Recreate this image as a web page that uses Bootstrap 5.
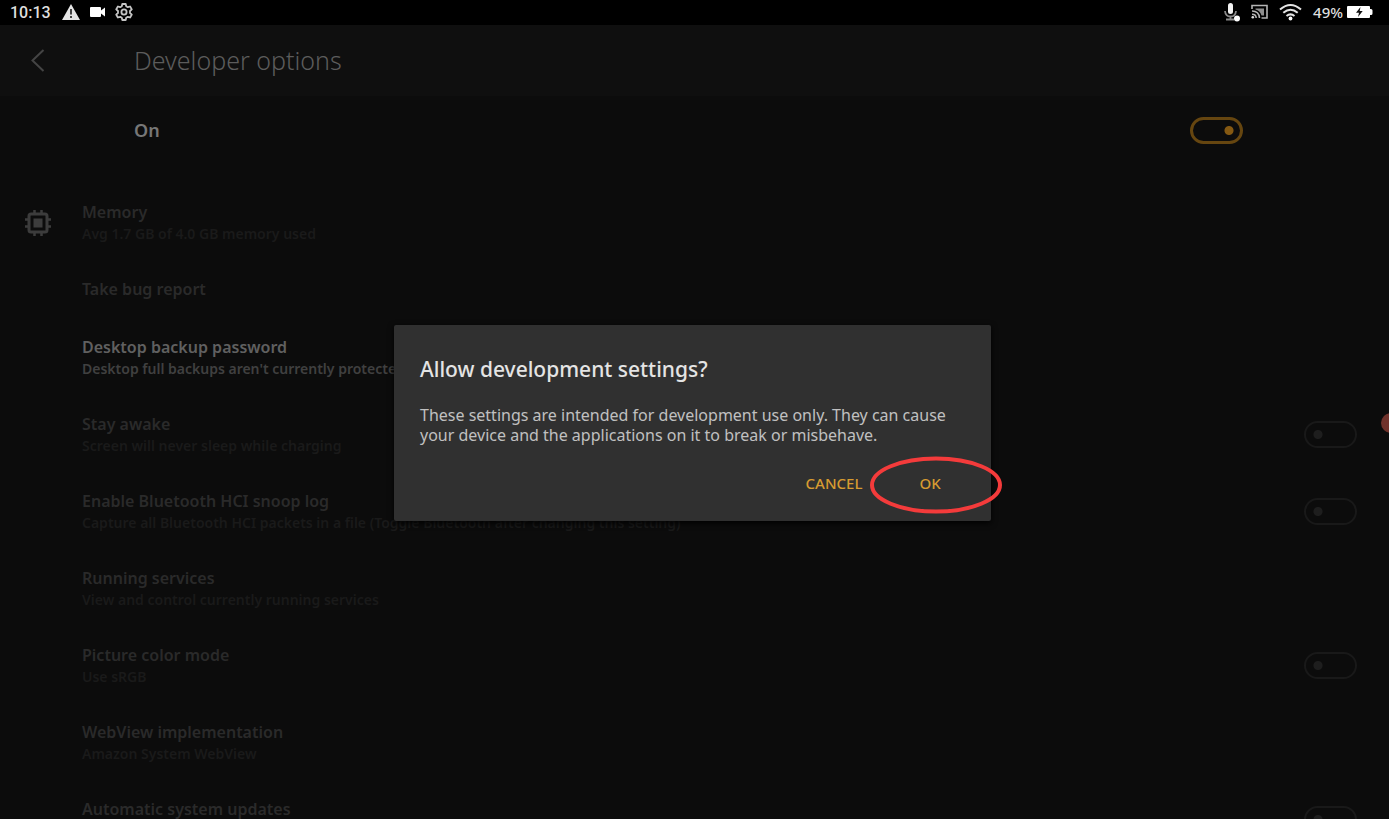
<!DOCTYPE html>
<html lang="en">
<head>
<meta charset="utf-8">
<meta name="viewport" content="width=device-width, initial-scale=1">
<title>Developer options</title>
<link href="https://cdn.jsdelivr.net/npm/bootstrap@5.3.0/dist/css/bootstrap.min.css" rel="stylesheet">
<style>
  body { background: #0c0c0c; color: #2a2a2a; font-family: "Noto Sans", "Open Sans", sans-serif; font-size: 16px; line-height: 21px; }
  svg { display: block; flex: none; }
  .status-bar { height: 26px; background: #000; color: #dedede; padding: 0 16px 0 10px; font-family: Roboto, sans-serif; font-size: 16px; font-weight: 500; }
  .status-left { gap: 10px; }
  .status-left span { width: 42px; }
  .status-right { gap: 11px; }
  .status-battery { gap: 4px; font-family: "Noto Sans", sans-serif; font-size: 15px; font-weight: 500; }
  .title-bar { height: 71px; background: #0f0f0f; padding-left: 30px; }
  .back-btn { width: 104px; color: #444; }
  .title-bar h1 { font-size: 25px; line-height: 34px; font-weight: 300; color: #5c5c5c; }
  .master-row { height: 70px; padding: 0 146px 0 134px; }
  .master-row label { font-size: 18px; font-weight: 600; color: #777; }
  .options { padding-top: 18px; }
  .option { padding: 18px 32px 17px 24px; }
  .option.single { padding-bottom: 19px; }
  .option-icon { width: 58px; color: #3c3c3c; }
  .option-name { font-weight: 600; }
  .option-note { font-size: 14px; color: #1a1a1a; font-weight: 600; }
  .option-text { min-height: 42px; }
  .option.available .option-name { color: #606060; }
  .option.available .option-note { color: #404040; }
  .toggle { appearance: none; width: 53px; height: 27px; margin: 0; border: 2px solid #191919; border-radius: 14px; flex: none;
    background: radial-gradient(circle at 12px 50%, #1e1e1e 4px, transparent 5px); }
  .toggle:checked { border: 3px solid #664610; background: radial-gradient(circle at 36px 50%, #855912 4px, transparent 5px); }
  .edge-dot { width: 20px; height: 20px; right: -12px; top: 388px; background: #70322b; }
  .scrim { padding: 18px 20px 16px 16px; }
  .prompt { max-width: 597px; background: #303030; border-radius: 2px; padding: 30px 26px 22px; color: #c0c0c0; box-shadow: 0 2px 6px #000; }
  .prompt h2 { font-size: 21px; line-height: 28px; font-weight: 500; color: #e4e4e4; margin-bottom: 22px; }
  .prompt p { line-height: 20px; margin-bottom: 22px; }
  .prompt-actions { gap: 32px; padding-right: 3px; }
  .prompt-btn { height: 32px; width: 64px; color: #d79b30; font-size: 15px; font-weight: 500; }
  .marker { left: 50%; top: 50%; transform: translate(-50%, -50%); margin: 2px 0 0 6px; }
</style>
</head>
<body>
<div class="vh-100 d-flex flex-column overflow-hidden">
  <header class="status-bar d-flex align-items-center justify-content-between">
    <div class="status-left d-flex align-items-center">
      <span>10:13</span>
      <svg width="18" height="18" viewBox="0 0 18 18" aria-hidden="true"><path d="M9 1 18 17H0Z" fill="#e6e6e6"/><path d="M9 6v5.500M9 13v2" stroke="#333" stroke-width="1.800"/></svg>
      <svg width="15" height="18" viewBox="0 0 15 18" fill="#fff" aria-hidden="true"><path d="M1 4h9q1 0 1 1v2.500L15 4.500v9L11 10.500V13q0 1-1 1H1q-1 0-1-1V5q0-1 1-1Z"/></svg>
      <svg width="18" height="18" viewBox="0 0 18 18" fill="none" stroke="#c4c4c4" stroke-width="1.800" stroke-linejoin="round" aria-hidden="true">
        <path d="M7.300 1h3.400l.5 2.300 1.600.9 2.300-.7 1.700 2.900-1.800 1.600v2l1.800 1.600-1.700 2.900-2.300-.7-1.600.9-.5 2.300H7.300l-.5-2.300-1.600-.9-2.300.7-1.700-2.900L3 10V8L1.200 6.400l1.700-2.900 2.300.7 1.600-.9Z"/><circle cx="9" cy="9" r="2.600"/>
      </svg>
    </div>
    <div class="status-right d-flex align-items-center">
      <svg width="16" height="20" viewBox="0 0 16 20" aria-hidden="true"><rect x="4" y="1" width="5" height="11" rx="2.500" fill="#f2f2f2"/><path d="M1 9q.5 5.500 5.500 5.500T12 9M6.500 14v4M2 17.500h8" fill="none" stroke="#8a8a8a" stroke-width="1.800"/><circle cx="13" cy="16.500" r="3" fill="#fff"/></svg>
      <svg width="17" height="16" viewBox="0 0 17 16" fill="none" stroke="#b4b4b4" stroke-width="1.600" aria-hidden="true"><path d="M1 5V1.500h15v12.500H10.500M1 7q7 0 7.500 7M1 10.300q4 0 4.200 3.700"/><path d="M4.500 4.500h8.500v7h-2.500Q9 6.500 4.500 5.500Z" fill="#8f8f8f" stroke="none"/><circle cx="1.800" cy="13.300" r="1.300" fill="#ddd" stroke="none"/></svg>
      <svg width="23" height="18" viewBox="0 0 23 18" fill="none" stroke="#e4e4e4" stroke-width="2" aria-hidden="true"><path d="M1 6.500q10.500-9 21 0M4.300 9.800q7.200-6 14.400 0M7.500 13q4-3.300 8 0"/><circle cx="11.500" cy="15.500" r="1.900" fill="#fff" stroke="none"/></svg>
      <div class="status-battery d-flex align-items-center">
        <span>49%</span>
        <svg width="26" height="12" viewBox="0 0 26 12" aria-hidden="true"><path d="M1 0h21q1 0 1 1v2h1q1.500 0 1.500 1.500v3Q25.500 9 24 9h-1v2q0 1-1 1H1q-1 0-1-1V1q0-1 1-1Z" fill="#fff"/><path d="M13.500 1 9 6.800h3L11 11l4.700-6h-3Z" fill="#111"/></svg>
      </div>
    </div>
  </header>
  <div class="position-relative flex-fill overflow-hidden">
    <div class="title-bar d-flex align-items-center">
      <button type="button" class="back-btn btn p-0 border-0 rounded-0 text-start" aria-label="Back">
        <svg width="16" height="24" viewBox="0 0 16 24" fill="none" stroke="currentColor" stroke-width="2"><path d="M13.500 2 2.500 12.500l11 10.500"/></svg>
      </button>
      <h1 class="m-0">Developer options</h1>
    </div>
    <main>
      <div class="master-row d-flex align-items-center justify-content-between">
        <label for="master">On</label>
        <input id="master" class="toggle" type="checkbox" role="switch" checked>
      </div>
      <div class="options">
        <div class="option d-flex align-items-center">
          <div class="option-icon">
            <svg width="28" height="28" viewBox="0 0 28 28" fill="none" stroke="currentColor" aria-hidden="true"><rect x="5" y="5" width="18" height="18" rx="2" stroke-width="3"/><path d="M10.500 1v4m7-4v4m-7 18v4m7-4v4M1 10.500h4m-4 7h4m18-7h4m-4 7h4" stroke-width="2.500"/><rect x="9.500" y="9.500" width="9" height="9" fill="currentColor" stroke="none"/></svg>
          </div>
          <div class="option-text flex-fill"><div class="option-name">Memory</div><div class="option-note">Avg 1.7 GB of 4.0 GB memory used</div></div>
        </div>
        <div class="option single d-flex align-items-center">
          <div class="option-icon"></div>
          <div class="flex-fill"><div class="option-name">Take bug report</div></div>
        </div>
        <div class="option available d-flex align-items-center">
          <div class="option-icon"></div>
          <div class="option-text flex-fill"><div class="option-name">Desktop backup password</div><div class="option-note">Desktop full backups aren't currently protected</div></div>
        </div>
        <div class="option d-flex align-items-center">
          <div class="option-icon"></div>
          <div class="option-text flex-fill"><label class="d-block option-name" for="awake">Stay awake</label><div class="option-note">Screen will never sleep while charging</div></div>
          <input id="awake" class="toggle" type="checkbox" role="switch">
        </div>
        <div class="option d-flex align-items-center">
          <div class="option-icon"></div>
          <div class="option-text flex-fill"><label class="d-block option-name" for="snoop">Enable Bluetooth HCI snoop log</label><div class="option-note">Capture all Bluetooth HCI packets in a file (Toggle Bluetooth after changing this setting)</div></div>
          <input id="snoop" class="toggle" type="checkbox" role="switch">
        </div>
        <div class="option d-flex align-items-center">
          <div class="option-icon"></div>
          <div class="option-text flex-fill"><div class="option-name">Running services</div><div class="option-note">View and control currently running services</div></div>
        </div>
        <div class="option d-flex align-items-center">
          <div class="option-icon"></div>
          <div class="option-text flex-fill"><label class="d-block option-name" for="color">Picture color mode</label><div class="option-note">Use sRGB</div></div>
          <input id="color" class="toggle" type="checkbox" role="switch">
        </div>
        <div class="option d-flex align-items-center">
          <div class="option-icon"></div>
          <div class="option-text flex-fill"><div class="option-name">WebView implementation</div><div class="option-note">Amazon System WebView</div></div>
        </div>
        <div class="option d-flex align-items-center">
          <div class="option-icon"></div>
          <div class="option-text flex-fill"><label class="d-block option-name" for="updates">Automatic system updates</label></div>
          <input id="updates" class="toggle" type="checkbox" role="switch">
        </div>
      </div>
    </main>
    <div class="edge-dot position-absolute rounded-circle"></div>
    <div class="scrim position-absolute top-0 start-0 w-100 h-100 d-flex align-items-center justify-content-center">
      <div class="prompt w-100" role="dialog" aria-labelledby="prompt-title">
        <h2 id="prompt-title">Allow development settings?</h2>
        <p>These settings are intended for development use only. They can cause your device and the applications on it to break or misbehave.</p>
        <div class="prompt-actions d-flex justify-content-end">
          <button type="button" class="prompt-btn btn p-0 border-0">CANCEL</button>
          <div class="position-relative">
            <button type="button" class="prompt-btn btn p-0 border-0">OK</button>
            <svg class="marker position-absolute pe-none" width="132" height="58" viewBox="0 0 132 58" fill="none" stroke="#f43b3b" stroke-width="4" aria-hidden="true"><ellipse cx="66" cy="29" rx="64" ry="26.500"/></svg>
          </div>
        </div>
      </div>
    </div>
  </div>
</div>
<script src="https://cdn.jsdelivr.net/npm/bootstrap@5.3.0/dist/js/bootstrap.bundle.min.js"></script>
</body>
</html>
